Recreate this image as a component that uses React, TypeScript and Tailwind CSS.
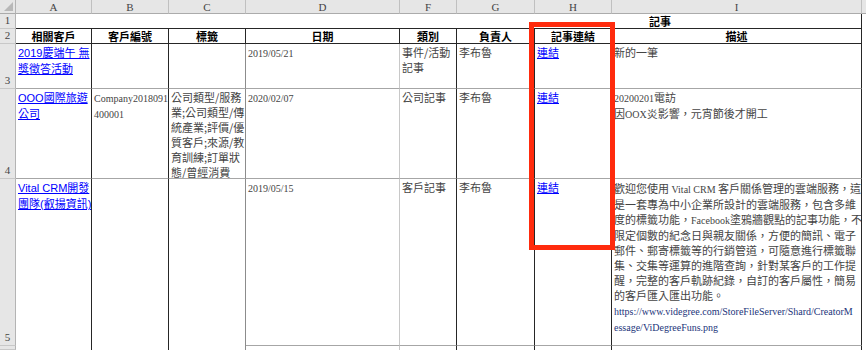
import React from "react";
import clsx from "clsx";

const serif = "font-['Liberation_Serif','Noto_Sans_CJK_TC',serif]";
const sans = "font-['Liberation_Sans','Noto_Sans_CJK_TC',sans-serif]";
const cjk = "font-['Noto_Sans_CJK_TC','Noto_Sans_CJK_JP',sans-serif]";

const letters = ["A", "B", "C", "D", "F", "G", "H", "I"];
const heads = ["相關客戶", "客戶編號", "標籤", "日期", "類別", "負責人", "記事連結", "描述"];

// right-hand rule of each data column, A..I
const vRule = [
  "border-r-[#262626]",
  "border-r-[#262626]",
  "border-r-[#8c8c8c]",
  "border-r-[#c8c8c8]",
  "border-r-[#262626]",
  "border-r-[#262626]",
  "border-r-[#262626]",
  "border-r-[#262626]",
];

function Lat({ children }: { children: React.ReactNode }) {
  return <span className={clsx(serif, "text-[10px]")}>{children}</span>;
}

function Link({ children }: { children: React.ReactNode }) {
  return <span className={clsx(sans, "text-[#0000ff] underline underline-offset-[1px]")}>{children}</span>;
}

function RowHead({ n }: { n?: string }) {
  return (
    <div className="flex items-end justify-center border-r border-b border-r-[#b4b4b4] border-b-[#c8c8c8] bg-[#e6e6e6] pb-[1px] font-['Liberation_Serif',serif] text-[11px] leading-[13px] text-[#444]">
      {n}
    </div>
  );
}

function Cell({
  col,
  children,
  open = false,
  className = "",
}: {
  col: number;
  children?: React.ReactNode;
  open?: boolean;
  className?: string;
}) {
  return (
    <div
      className={clsx(
        "overflow-hidden whitespace-nowrap border-r px-[2px] pt-[1px] text-[11px] leading-[15px] text-[#444]",
        vRule[col],
        !open && "border-b border-b-[#a6a6a6]",
        cjk,
        className
      )}
    >
      {children}
    </div>
  );
}

function Lines({ items }: { items: React.ReactNode[] }) {
  return (
    <>
      {items.map((t, i) => (
        <div key={i}>{t}</div>
      ))}
    </>
  );
}

export default function App() {
  return (
    <div className="relative h-[350px] w-[866px] overflow-hidden bg-white">
      <div className="grid h-full grid-cols-[16px_76px_77px_77px_154px_57px_78px_77px_250px_1fr] grid-rows-[14px_15px_15px_45px_90px_167px_1fr]">
        {/* column letters */}
        <div className="relative border-r border-b border-r-[#b4b4b4] border-b-[#ababab] bg-[#e6e6e6]">
          <svg className="absolute right-[2px] bottom-[2px]" width="9" height="9" viewBox="0 0 9 9">
            <polygon points="9,0 9,9 0,9" fill="#b8b8b8" />
          </svg>
        </div>
        {letters.map((l) => (
          <div
            key={l}
            className="border-r border-b border-r-[#c0c0c0] border-b-[#ababab] bg-[#e6e6e6] text-center font-['Liberation_Serif',serif] text-[11px] leading-[14px] text-[#444]"
          >
            {l}
          </div>
        ))}
        <div className="border-b border-b-[#ababab] bg-[#e6e6e6]" />

        {/* row 1 */}
        <RowHead n="1" />
        {letters.slice(0, 7).map((l) => (
          <div key={l} className="border-b border-b-[#262626]" />
        ))}
        <div className={clsx(cjk, "border-r border-b border-r-[#262626] border-b-[#262626] pl-[37px] text-[11px] font-bold leading-[14px] text-black")}>
          記事
        </div>
        <div />

        {/* row 2: headings */}
        <RowHead n="2" />
        {heads.map((h) => (
          <div
            key={h}
            className={clsx(cjk, "border-r border-b border-r-[#262626] border-b-[#262626] text-center text-[11px] font-bold leading-[14px] text-black")}
          >
            {h}
          </div>
        ))}
        <div />

        {/* row 3 */}
        <RowHead n="3" />
        <Cell col={0}>
          <Lines items={[<Link>2019慶端午 無</Link>, <Link>獎徵答活動</Link>]} />
        </Cell>
        <Cell col={1} />
        <Cell col={2} />
        <Cell col={3}>
          <Lat>2019/05/21</Lat>
        </Cell>
        <Cell col={4}>
          <Lines items={["事件/活動", "記事"]} />
        </Cell>
        <Cell col={5}>李布魯</Cell>
        <Cell col={6}>
          <Link>連結</Link>
        </Cell>
        <Cell col={7}>新的一筆</Cell>
        <div />

        {/* row 4 */}
        <RowHead n="4" />
        <Cell col={0}>
          <Lines items={[<Link>OOO國際旅遊</Link>, <Link>公司</Link>]} />
        </Cell>
        <Cell col={1}>
          <Lines items={[<Lat>Company2018091</Lat>, <Lat>400001</Lat>]} />
        </Cell>
        <Cell col={2}>
          <Lines items={["公司類型/服務", "業;公司類型/傳", "統產業;評價/優", "質客戶;來源/教", "育訓練;訂單狀", "態/曾經消費"]} />
        </Cell>
        <Cell col={3}>
          <Lat>2020/02/07</Lat>
        </Cell>
        <Cell col={4}>公司記事</Cell>
        <Cell col={5}>李布魯</Cell>
        <Cell col={6}>
          <Link>連結</Link>
        </Cell>
        <Cell col={7}>
          <Lines
            items={[
              <>
                <Lat>20200201</Lat>電訪
              </>,
              <>
                因<Lat>OOX</Lat>炎影響，元宵節後才開工
              </>,
            ]}
          />
        </Cell>
        <div />

        {/* row 5 */}
        <RowHead n="5" />
        <Cell col={0} open>
          <Lines items={[<Link>Vital CRM開發</Link>, <Link>團隊(叡揚資訊)</Link>]} />
        </Cell>
        <Cell col={1} open />
        <Cell col={2} open />
        <Cell col={3}>
          <Lat>2019/05/15</Lat>
        </Cell>
        <Cell col={4}>客戶記事</Cell>
        <Cell col={5}>李布魯</Cell>
        <Cell col={6}>
          <Link>連結</Link>
        </Cell>
        <Cell col={7} className="pt-[2px]">
          <Lines
            items={[
              <>
                歡迎您使用 <Lat>Vital CRM</Lat> 客戶關係管理的雲端服務，這
              </>,
              "是一套專為中小企業所設計的雲端服務，包含多維",
              <>
                度的標籤功能，<Lat>Facebook</Lat>塗鴉牆觀點的記事功能，不
              </>,
              "限定個數的紀念日與親友關係，方便的簡訊、電子",
              "郵件、郵寄標籤等的行銷管道，可隨意進行標籤聯",
              "集、交集等運算的進階查詢，針對某客戶的工作提",
              "醒，完整的客戶軌跡紀錄，自訂的客戶屬性，簡易",
              "的客戶匯入匯出功能。",
              <span className="text-[#22347a]">
                <Lat>https://www.videgree.com/StoreFileServer/Shard/CreatorM</Lat>
              </span>,
              <span className="text-[#22347a]">
                <Lat>essage/ViDegreeFuns.png</Lat>
              </span>,
            ]}
          />
        </Cell>
        <div />

        {/* row 6, cut off by the window */}
        <RowHead />
        <Cell col={0} open />
        <Cell col={1} open />
        <Cell col={2} open />
        <Cell col={3} open />
        <Cell col={4} open className="pt-[3px]">
          公司記事
        </Cell>
        <Cell col={5} open className="pt-[3px]">
          李布魯
        </Cell>
        <Cell col={6} open className="pt-[3px]">
          <Link>連結</Link>
        </Cell>
        <Cell col={7} open className="pt-[3px]">
          歡迎您使用新的記事功能，可以記錄客戶的往來資訊
        </Cell>
        <div />
      </div>

      {/* highlight annotation */}
      <div className="pointer-events-none absolute top-[22px] left-[529px] h-[228px] w-[86px] border-[5px] border-[#ff2b0d]" />
    </div>
  );
}
